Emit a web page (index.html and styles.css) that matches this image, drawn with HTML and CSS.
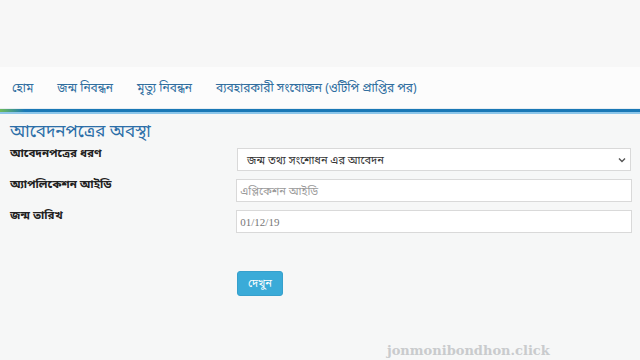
FILE: index.html
```html
<!DOCTYPE html>
<html lang="bn">
<head>
<meta charset="utf-8">
<link rel="stylesheet" href="styles.css">
</head>
<body>
<div class="top"></div>
<nav class="nav">
  <a class="nav-item">হোম</a>
  <a class="nav-item">জন্ম নিবন্ধন</a>
  <a class="nav-item">মৃত্যু নিবন্ধন</a>
  <a class="nav-item">ব্যবহারকারী সংযোজন (ওটিপি প্রাপ্তির পর)</a>
</nav>
<div class="rule"></div>
<main class="content">
  <h1 class="title">আবেদনপত্রের অবস্থা</h1>
  <div class="row">
    <label class="label">আবেদনপত্রের ধরণ</label>
    <div class="field select">
      <span class="select-text">জন্ম তথ্য সংশোধন এর আবেদন</span>
      <svg class="chev" width="8" height="6" viewBox="0 0 8 6"><path d="M1 1.5 L4 4.5 L7 1.5" fill="none" stroke="#555" stroke-width="1.4"/></svg>
    </div>
  </div>
  <div class="row">
    <label class="label">অ্যাপলিকেশন আইডি</label>
    <div class="field"><span class="placeholder">এপ্লিকেশন আইডি</span></div>
  </div>
  <div class="row last">
    <label class="label">জন্ম তারিখ</label>
    <div class="field"><span class="placeholder date">01/12/19</span></div>
  </div>
  <div class="btn-row">
    <button class="btn">দেখুন</button>
  </div>
  <div class="watermark">jonmonibondhon.click</div>
</main>
</body>
</html>
```
FILE: styles.css
```css
html, body {
  margin: 0;
  padding: 0;
  background: #f6f7f7;
  width: 640px;
  height: 360px;
  overflow: hidden;
  font-family: "Noto Sans", "Noto Sans Bengali", sans-serif;
}
.top {
  height: 67px;
  background: #f7f7f7;
}
.nav {
  height: 41px;
  background: #fcfcfc;
  display: flex;
  align-items: center;
  padding-left: 12px;
  gap: 24px;
}
.nav-item {
  color: #2f6e9f;
  font-size: 12px;
}
.rule {
  height: 3px;
  background: linear-gradient(to right, #6dbb5a 0px, #1a78b6 25px, #1a78b6 100%);
  border-top: 1px solid #e8eef2;
  border-bottom: 2px solid #8cc6ea;
}
.content {
  padding: 7px 8px 0 10px;
  position: relative;
  height: 240px;
}
.title {
  margin: 0 0 7px 0;
  font-size: 17px;
  font-weight: normal;
  color: #2b6ea8;
  line-height: 20px;
}
.row {
  display: flex;
  align-items: flex-start;
  height: 23px;
  margin-bottom: 8px;
}
.row.last {
  margin-bottom: 0;
}
.label {
  width: 227px;
  font-size: 11.5px;
  font-weight: bold;
  color: #222;
  line-height: 12px;
  margin-top: -1px;
}
.field {
  width: 389px;
  height: 21px;
  background: #fff;
  border: 1px solid #d9d9d9;
  display: flex;
  align-items: center;
  padding: 0 3px;
  box-sizing: content-box;
}
.select {
  justify-content: space-between;
  padding-left: 9px;
  width: 379px;
  padding-right: 4px;
}
.select-text {
  font-size: 11px;
  color: #333;
}
.placeholder {
  font-size: 11px;
  color: #9a9a9a;
}
.date {
  font-family: "Liberation Serif", serif;
  font-size: 11px;
  color: #777;
}
.btn-row {
  padding-left: 227px;
  margin-top: 37px;
}
.btn {
  background: #3aabd8;
  border: 1px solid #36a0cc;
  border-radius: 3px;
  color: #fff;
  font-size: 11px;
  width: 46px;
  height: 25px;
  font-family: inherit;
  padding: 0;
}
.watermark {
  position: absolute;
  left: 387px;
  top: 229px;
  font-family: "DejaVu Serif", serif;
  font-weight: bold;
  font-size: 13px;
  color: #c9cbcd;
}
```
